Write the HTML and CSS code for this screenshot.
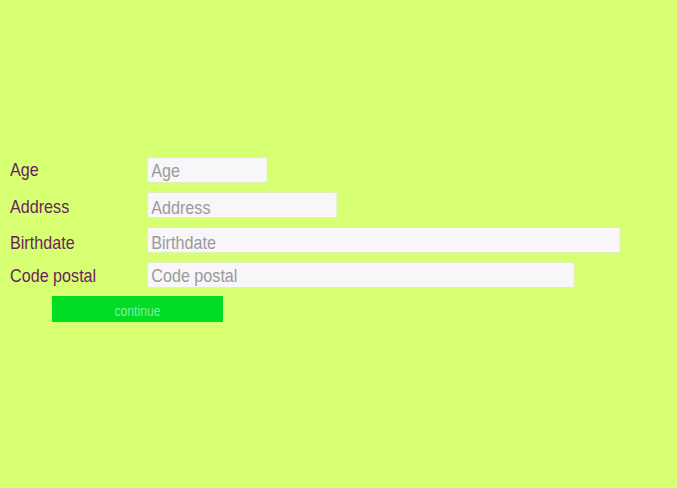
FILE: index.html
```html
<!DOCTYPE html>
<html>
<head>
<meta charset="utf-8">
<link rel="stylesheet" href="styles.css">
</head>
<body>
<form class="form">
  <div class="row r1"><label class="label"><span class="narrow">Age</span></label><input class="field w-age" placeholder="Age"></div>
  <div class="row r2"><label class="label"><span class="narrow">Address</span></label><input class="field w-address" placeholder="Address"></div>
  <div class="row r3"><label class="label"><span class="narrow">Birthdate</span></label><input class="field w-birth" placeholder="Birthdate"></div>
  <div class="row r4"><label class="label"><span class="narrow">Code postal</span></label><input class="field w-code" placeholder="Code postal"></div>
  <button type="button" class="btn"><span class="narrow-c">continue</span></button>
</form>
</body>
</html>
```
FILE: styles.css
```css
html, body {
  margin: 0;
  height: 100%;
  background: #d6ff72;
}
body {
  font-family: "Liberation Sans", Arial, sans-serif;
}
.form {
  padding: 157px 0 0 10px;
  display: flex;
  flex-direction: column;
  gap: 9px;
}
.row {
  display: flex;
  align-items: flex-start;
  height: 26px;
}
.label {
  box-sizing: border-box;
  width: 137px;
  flex: none;
  font-size: 19px;
  line-height: 24px;
  color: #6b1f5c;
}
.narrow {
  display: inline-block;
  white-space: nowrap;
  transform: scaleX(0.85);
  transform-origin: left center;
}
.field {
  box-sizing: border-box;
  height: 26px;
  margin: 0;
  padding: 0 4px;
  border: 1px solid #e2eebc;
  border-radius: 2px;
  background: #f8f6f8;
  font-family: "Liberation Sans", Arial, sans-serif;
  font-size: 19px;
  color: #333;
  transform: scaleX(0.85);
  transform-origin: left center;
  flex: none;
}
.field::placeholder {
  color: #9a9a9a;
}
.r1 .label { padding-top: 1px; }
.r2 .label { padding-top: 3px; }
.r3 .label { padding-top: 4px; }
.r4 .label { padding-top: 2px; }
.r1 .field { padding-top: 2px; }
.r2 .field { padding-top: 5px; }
.r3 .field { padding-top: 5px; }
.r4 .field { padding-top: 1px; }
.w-age { width: 142px; }
.w-address { width: 224px; }
.w-birth { width: 557px; }
.w-code { width: 503px; }
.btn {
  align-self: flex-start;
  margin: -1px 0 0 42px;
  width: 171px;
  height: 26px;
  border: 0;
  padding: 4px 0 0;
  background: #00dd22;
  color: #84eca6;
  font-family: "Liberation Sans", Arial, sans-serif;
  font-size: 14px;
}
.narrow-c {
  display: inline-block;
  transform: scaleX(0.87);
}
```
